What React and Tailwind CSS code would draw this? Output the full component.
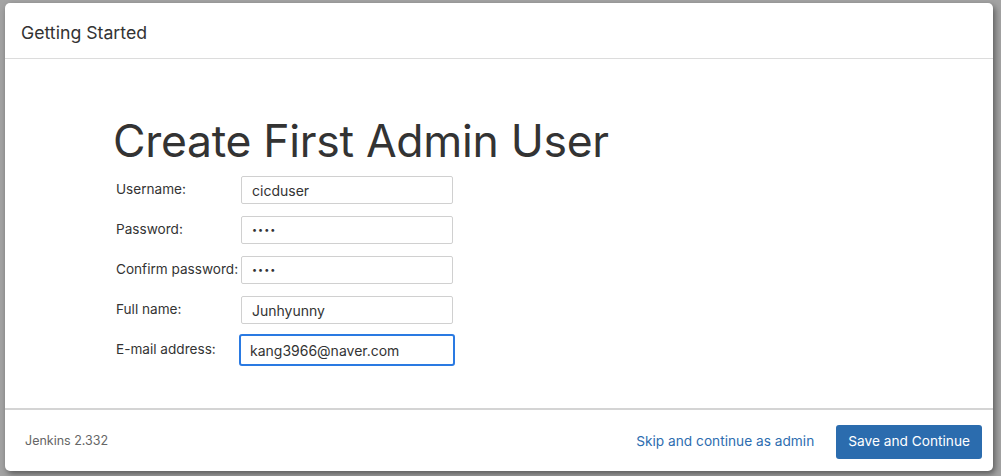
export default function App() {
  const rows = [
    { label: 'Username:', value: 'cicduser' },
    { label: 'Password:', value: '••••', pw: true },
    { label: 'Confirm password:', value: '••••', pw: true },
    { label: 'Full name:', value: 'Junhyunny' },
    { label: 'E-mail address:', value: 'kang3966@naver.com', focus: true },
  ];

  return (
    <div className="w-[1001px] h-[476px] bg-[#a3a3a3] pl-[5px] pt-[3px] font-['Inter',sans-serif] text-[#333]">
      <div className="w-[988px] h-[468px] bg-white rounded-[5px] shadow-[2px_3px_6px_rgba(0,0,0,0.45)] flex flex-col overflow-hidden">
        {/* Header */}
        <div className="h-[56px] shrink-0 border-b border-[#dcdcdc] flex items-center px-[16px] pt-[6px]">
          <h4 className="text-[17.7px] text-[#333]">Getting Started</h4>
        </div>

        {/* Body */}
        <div className="flex-1 pl-[108px] pt-[52px]">
          <h1 className="text-[44.5px] leading-[60px] tracking-[-0.3px] text-[#333] mb-[5px]">Create First Admin User</h1>
          <div className="flex flex-col gap-[12px] pl-[3px]">
            {rows.map((r) => (
              <div key={r.label} className="flex items-start h-[28px]">
                <label className="w-[125px] whitespace-nowrap text-[13.6px] text-[#333] pt-[3px]">{r.label}</label>
                {r.focus ? (
                  <div className="w-[216px] h-[32px] -ml-[2px] -mt-[2px] border-2 border-[#2a7ae2] rounded-[3px] flex items-center px-[9px] text-[14px] text-[#333]">
                    {r.value}
                  </div>
                ) : (
                  <div className="w-[212px] h-[28px] border border-[#d0d0d0] rounded-[2px] flex items-center px-[10px] text-[14px] text-[#333]">
                    {r.pw ? <span className="tracking-[1px] text-[9px]">{r.value}</span> : r.value}
                  </div>
                )}
              </div>
            ))}
          </div>
        </div>

        {/* Footer */}
        <div className="h-[63px] shrink-0 border-t-2 border-[#d4d4d4] flex items-center justify-between pl-[20px] pr-[11px] pt-[2px]">
          <span className="text-[12.5px] text-[#666]">Jenkins 2.332</span>
          <div className="flex items-center gap-[22px]">
            <a className="text-[13.7px] text-[#2d6db0]">Skip and continue as admin</a>
            <button className="h-[34px] px-[12px] bg-[#2b6cae] text-white text-[13.7px] rounded-[3px]">Save and Continue</button>
          </div>
        </div>
      </div>
    </div>
  );
}
